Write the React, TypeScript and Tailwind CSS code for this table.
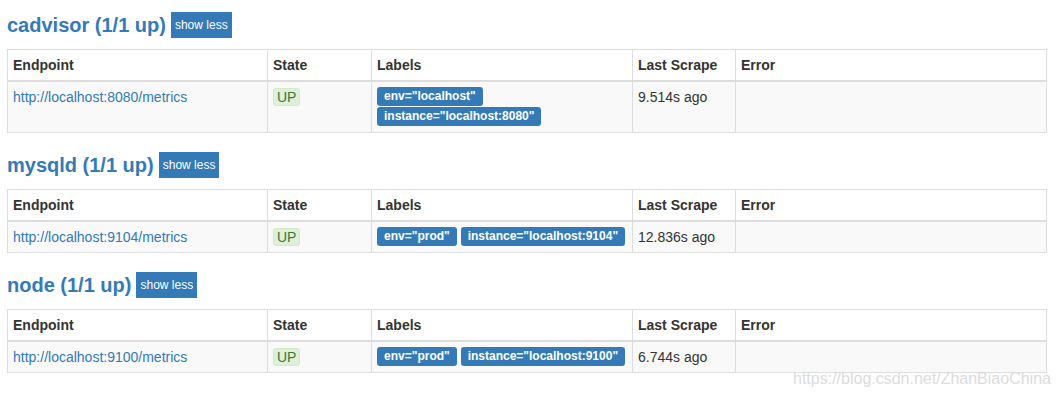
import React from "react";

type Target = {
  endpoint: string;
  labels: string[];
  scrape: string;
};

type Job = { name: string; targets: Target[] };

const jobs: Job[] = [
  {
    name: "cadvisor",
    targets: [
      {
        endpoint: "http://localhost:8080/metrics",
        labels: ['env="localhost"', 'instance="localhost:8080"'],
        scrape: "9.514s ago",
      },
    ],
  },
  {
    name: "mysqld",
    targets: [
      {
        endpoint: "http://localhost:9104/metrics",
        labels: ['env="prod"', 'instance="localhost:9104"'],
        scrape: "12.836s ago",
      },
    ],
  },
  {
    name: "node",
    targets: [
      {
        endpoint: "http://localhost:9100/metrics",
        labels: ['env="prod"', 'instance="localhost:9100"'],
        scrape: "6.744s ago",
      },
    ],
  },
];

function Section({ job, first }: { job: Job; first: boolean }) {
  return (
    <div className={first ? "" : "mt-[19px]"}>
      <div className="flex h-[26px] items-center gap-[5px]">
        <a className="text-[20px] font-bold leading-[26px] text-[#337ab7]">
          {job.name} (1/1 up)
        </a>
        <button className="h-[26px] bg-[#337ab7] px-[4px] text-[12px] leading-[18px] text-white">
          show less
        </button>
      </div>
      <table className="mt-[11px] w-[1039px] table-fixed border-collapse border border-[#ddd] text-[14px] leading-[20px] text-[#333]">
        <colgroup>
          <col className="w-[260px]" />
          <col className="w-[104px]" />
          <col className="w-[261px]" />
          <col className="w-[103px]" />
          <col className="w-[311px]" />
        </colgroup>
        <thead>
          <tr>
            {["Endpoint", "State", "Labels", "Last Scrape", "Error"].map((h) => (
              <th
                key={h}
                className="border border-b-2 border-[#ddd] p-[5px] text-left font-bold"
              >
                {h}
              </th>
            ))}
          </tr>
        </thead>
        <tbody>
          {job.targets.map((t) => (
            <tr key={t.endpoint} className="bg-[#f9f9f9]">
              <td className="border border-[#ddd] p-[5px] align-top">
                <a className="text-[#337ab7]">{t.endpoint}</a>
              </td>
              <td className="border border-[#ddd] p-[5px] align-top">
                <span className="mt-[1px] inline-block rounded-[3px] border border-[#d6e9c6] bg-[#dff0d8] px-[3px] align-top leading-[16px] text-[#3c763d]">
                  UP
                </span>
              </td>
              <td className="border border-[#ddd] p-[5px] align-top">
                {t.labels.map((l, i) => (
                  <React.Fragment key={l}>
                    {i > 0 ? " " : null}
                    <span className="inline-block rounded-[3px] bg-[#337ab7] px-[7px] pb-[3px] pt-[2px] align-top text-[12px] font-bold leading-[14px] text-white">
                      {l}
                    </span>
                  </React.Fragment>
                ))}
              </td>
              <td className="border border-[#ddd] p-[5px] align-top">{t.scrape}</td>
              <td className="border border-[#ddd] p-[5px] align-top"></td>
            </tr>
          ))}
        </tbody>
      </table>
    </div>
  );
}

export default function App() {
  return (
    <div
      className="relative h-[397px] w-[1061px] overflow-hidden bg-white px-[7px] pt-[12px]"
      style={{ fontFamily: '"Liberation Sans", Arial, sans-serif' }}
    >
      {jobs.map((j, i) => (
        <Section key={j.name} job={j} first={i === 0} />
      ))}
      <div className="pointer-events-none absolute left-[793px] top-[369px] text-[16px] leading-[20px] text-[#dcdcdc]">
        https://blog.csdn.net/ZhanBiaoChina
      </div>
    </div>
  );
}
